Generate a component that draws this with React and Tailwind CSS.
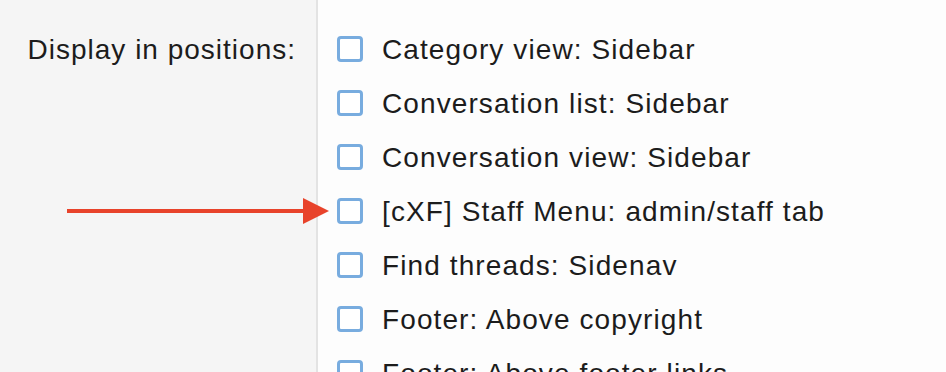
import React from "react";

const positions = [
  "Category view: Sidebar",
  "Conversation list: Sidebar",
  "Conversation view: Sidebar",
  "[cXF] Staff Menu: admin/staff tab",
  "Find threads: Sidenav",
  "Footer: Above copyright",
  "Footer: Above footer links",
];

function Checkbox() {
  return <span className="block w-[26px] h-[26px] shrink-0 rounded-[4px] border-[3px] border-[#78acdf] bg-white" />;
}

export default function App() {
  return (
    <div
      className="relative flex h-[372px] w-[946px] overflow-hidden bg-[#fdfdfd] text-[#1c1c1c]"
      style={{ fontFamily: '"Liberation Sans", Arial, sans-serif' }}
    >
      <div className="w-[318px] shrink-0 border-r-2 border-[#e3e3e3] bg-[#f5f5f5] pr-[20px] pt-[23px] text-right">
        <div className="h-[54px] flex items-center justify-end text-[28px] tracking-[1px]">Display in positions:</div>
      </div>
      <div className="flex flex-col pl-[19px] pt-[22px]">
        {positions.map((label) => (
          <label key={label} className="flex h-[54px] shrink-0 items-center gap-[19px]">
            <Checkbox />
            <span className="whitespace-nowrap text-[28px] tracking-[1.1px] pt-[2px]">{label}</span>
          </label>
        ))}
      </div>

      {/* annotation arrow */}
      <svg className="absolute left-[67px] top-[198px]" width="262" height="26" viewBox="0 0 262 26">
        <rect x="0" y="11" width="240" height="4" fill="#e8432b" />
        <polygon points="236,0 262,13 236,26" fill="#e8432b" />
      </svg>
    </div>
  );
}
